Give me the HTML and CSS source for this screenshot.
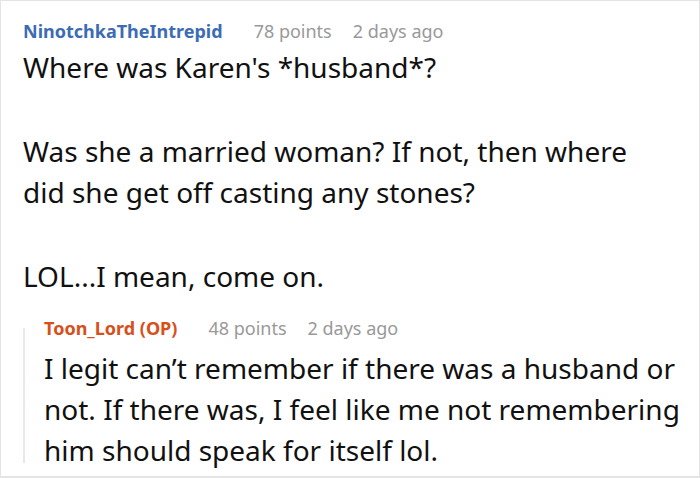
FILE: index.html
```html
<!DOCTYPE html>
<html>
<head>
<meta charset="utf-8">
<link rel="stylesheet" href="styles.css">
</head>
<body>
<div class="frame">
  <div class="comment">
    <div class="meta">
      <span class="author blue">NinotchkaTheIntrepid</span>
      <span class="info">78 points</span>
      <span class="info">2 days ago</span>
    </div>
    <div class="text main-text">
      <p>Where was Karen's *husband*?</p>
      <p>Was she a married woman? If not, then where did she get off casting any stones?</p>
      <p>LOL...I mean, come on.</p>
    </div>
    <div class="reply">
      <div class="meta">
        <span class="author orange">Toon_Lord (OP)</span>
        <span class="info">48 points</span>
        <span class="info">2 days ago</span>
      </div>
      <div class="text">
        <p>I legit can’t remember if there was a husband or not. If there was, I feel like me not remembering him should speak for itself lol.</p>
      </div>
    </div>
  </div>
</div>
</body>
</html>
```
FILE: styles.css
```css
html, body {
  margin: 0;
  padding: 0;
  background: #fff;
}
.frame {
  width: 700px;
  height: 478px;
  box-sizing: border-box;
  border: 1px solid #e4e4e4;
  border-bottom-width: 2px;
  overflow: hidden;
  font-family: "Noto Sans", "Open Sans", sans-serif;
}
.comment {
  padding: 16px 18px 0 22px;
}
.meta {
  display: flex;
  gap: 21px;
  font-size: 18px;
  line-height: 28px;
}
.author {
  font-weight: 700;
  margin-right: 10px;
}
.blue { color: #3b6cb4; }
.orange { color: #d6501c; }
.info { color: #999; }
.text {
  font-size: 28px;
  line-height: 41px;
  color: #111;
  margin-top: 2px;
}
.main-text {
  padding-right: 20px;
}
.text p {
  margin: 0 0 43px 0;
}
.text p:last-child {
  margin-bottom: 0;
}
.reply {
  position: relative;
  margin-top: 17px;
  padding-left: 21px;
}
.reply::before {
  content: "";
  position: absolute;
  left: 0;
  top: 14px;
  bottom: 8px;
  width: 2px;
  background: #e8e8e8;
}
.reply .text {
  margin-top: 6px;
}
```
